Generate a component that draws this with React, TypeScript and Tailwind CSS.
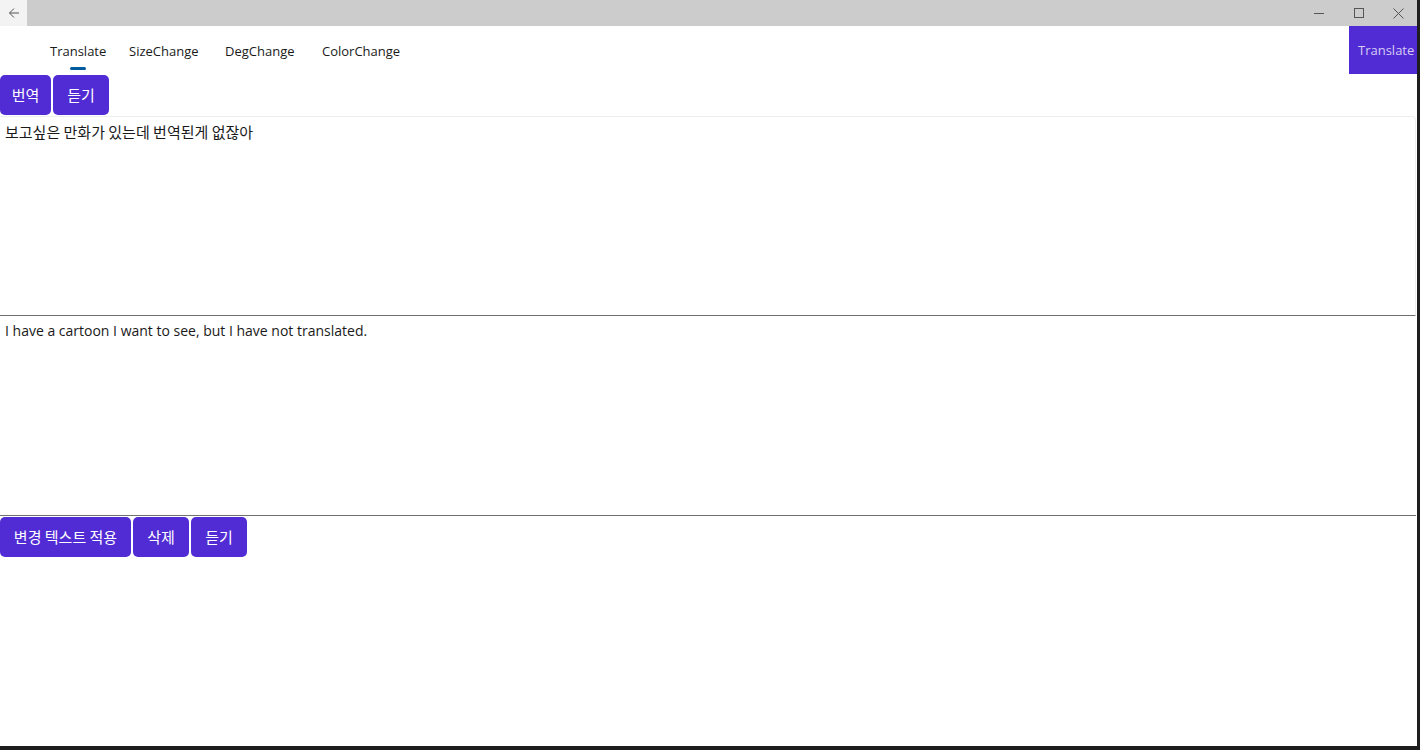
import React from "react";

const kr = { fontFamily: '"Noto Sans CJK KR", "Noto Sans", sans-serif' };
const lat = { fontFamily: '"Open Sans", "Noto Sans", sans-serif' };

function Btn({ label, w }: { label: string; w: string }) {
  return (
    <button
      className={`h-[40px] ${w} rounded-[5px] bg-[#512bd4] text-white text-[15px] flex items-center justify-center`}
      style={kr}
    >
      {label}
    </button>
  );
}

export default function App() {
  return (
    <div className="w-[1420px] h-[750px] flex flex-col bg-white overflow-hidden">
      <div className="flex flex-1 min-h-0">
        <div className="flex-1 flex flex-col min-w-0">
          {/* title bar */}
          <div className="h-[26px] bg-[#cccccc] flex items-center shrink-0">
            <div className="w-[27px] h-full bg-[#f3f3f3] flex items-center justify-center">
              <svg width="12" height="12" viewBox="0 0 12 12" fill="none" stroke="#555" strokeWidth="1">
                <path d="M11 6H1.5M6 1.5L1.5 6L6 10.5" />
              </svg>
            </div>
            <div className="flex-1" />
            <div className="w-[40px] h-full flex items-center justify-center">
              <svg width="10" height="10" viewBox="0 0 10 10" stroke="#555" strokeWidth="1">
                <path d="M0 5.5H10" />
              </svg>
            </div>
            <div className="w-[40px] h-full flex items-center justify-center">
              <svg width="10" height="10" viewBox="0 0 10 10" fill="none" stroke="#555" strokeWidth="1">
                <rect x="0.5" y="0.5" width="9" height="9" />
              </svg>
            </div>
            <div className="w-[38px] h-full flex items-center justify-center">
              <svg width="11" height="11" viewBox="0 0 11 11" stroke="#555" strokeWidth="1">
                <path d="M0.5 0.5L10.5 10.5M10.5 0.5L0.5 10.5" />
              </svg>
            </div>
          </div>
          {/* tabs */}
          <div className="h-[48px] flex shrink-0">
            <div className="flex pl-[50px] pt-[4px] flex-1 text-[13px] text-[#1a1a1a]" style={lat}>
              <div className="relative flex items-center w-[79px]">
                <span>Translate</span>
                <div className="absolute left-[20px] top-[37px] w-[16px] h-[3px] rounded-full bg-[#005a9e]" />
              </div>
              <div className="flex items-center w-[96px]">SizeChange</div>
              <div className="flex items-center w-[97px]">DegChange</div>
              <div className="flex items-center">ColorChange</div>
            </div>
            <div className="w-[68px] h-full bg-[#512bd4] text-[#d6cdf3] text-[13px] flex items-center pl-[9px] pt-[2px]" style={lat}>
              Translate
            </div>
          </div>
          {/* buttons */}
          <div className="flex gap-[2px] mt-[1px] shrink-0">
            <Btn label="번역" w="w-[51px]" />
            <Btn label="듣기" w="w-[56px]" />
          </div>
          {/* text box 1 */}
          <div className="h-[200px] mt-[1px] mr-[1px] shrink-0 border-t border-r border-[#eeeeee] rounded-tr-[4px] border-b border-b-[#707070] px-[5px] pt-[4px]">
            <div className="text-[15px] text-[#1a1a1a]" style={kr}>
              보고싶은 만화가 있는데 번역된게 없잖아
            </div>
          </div>
          {/* text box 2 */}
          <div className="h-[200px] mr-[1px] shrink-0 border-b border-b-[#707070] px-[5px] pt-[4px]">
            <div className="text-[14px] text-[#1a1a1a]" style={lat}>
              I have a cartoon I want to see, but I have not translated.
            </div>
          </div>
          {/* bottom buttons */}
          <div className="flex gap-[2px] mt-[1px] shrink-0">
            <Btn label="변경 텍스트 적용" w="w-[131px]" />
            <Btn label="삭제" w="w-[56px]" />
            <Btn label="듣기" w="w-[56px]" />
          </div>
          <div className="flex-1" />
        </div>
        <div className="w-[3px] bg-[#1e1e1e] shrink-0" />
      </div>
      <div className="h-[4px] bg-[#1e1e1e] shrink-0" />
    </div>
  );
}
